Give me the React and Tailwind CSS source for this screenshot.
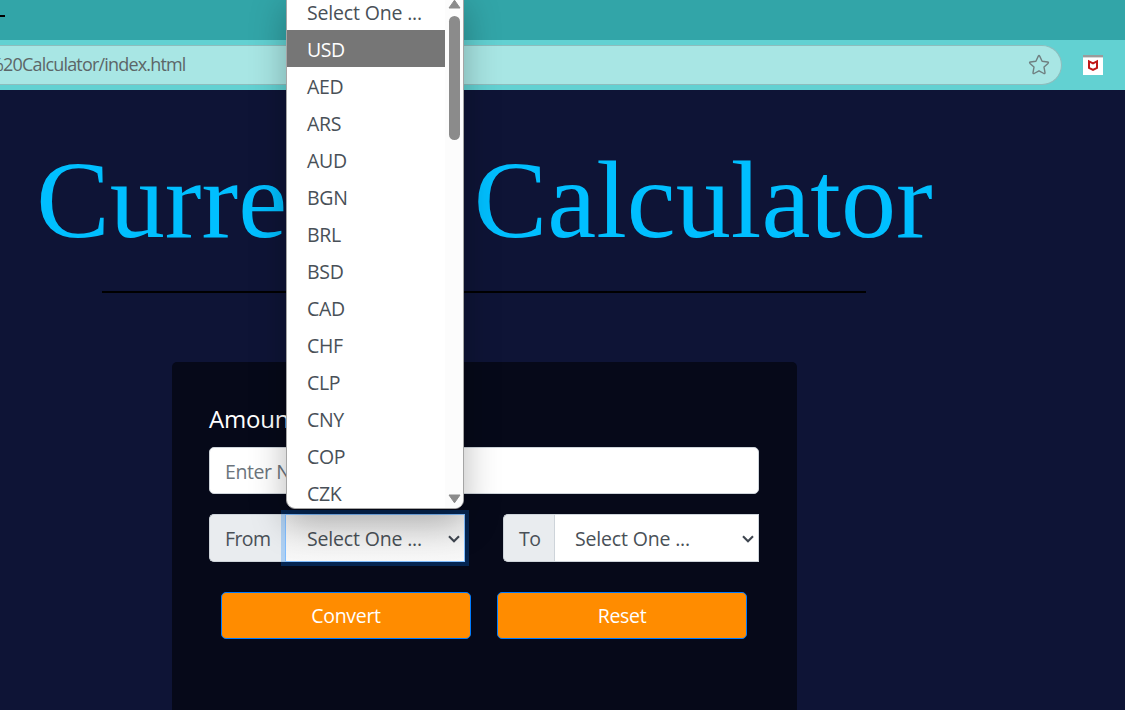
import React from "react";

const currencies = ["USD", "AED", "ARS", "AUD", "BGN", "BRL", "BSD", "CAD", "CHF", "CLP", "CNY", "COP", "CZK"];

function Chevron() {
  return (
    <svg width="14" height="10" viewBox="0 0 14 10" fill="none" className="shrink-0">
      <path d="M2 2.2 L7 7.2 L12 2.2" stroke="#3f4650" strokeWidth="2.1" />
    </svg>
  );
}

function BrowserBar() {
  return (
    <header className="shrink-0">
      <div className="h-10 bg-[#32a5a8]">
        <div className="h-[15px]" />
        <div className="h-[1.5px] w-[5px] bg-black" />
      </div>
      <div className="flex h-[50px] items-center bg-[#62d1d2]">
        <div className="flex h-[40px] w-[1062px] items-center justify-between rounded-r-full border border-l-0 border-[#8dbdbd] bg-[#a8e6e4] pr-[11px]">
          <div className="-ml-[11px] pb-[2px] text-[18px] leading-6 tracking-[-0.82px] whitespace-nowrap text-[#5c6668]">
            %20Calculator/index.html
          </div>
          <svg width="22" height="22" viewBox="0 0 22 22" fill="none" stroke="#6f7f80" strokeWidth="1.4" strokeLinejoin="round">
            <path d="M10.3 2.1 Q11 1 11.7 2.1 L14.1 7.3 L19.6 8 Q21 8.3 20 9.4 L16 13.1 L17 18.6 Q17.1 20 15.9 19.5 L11 16.8 L6.1 19.5 Q4.9 20 5 18.6 L6 13.1 L2 9.4 Q1 8.3 2.4 8 L7.9 7.3 Z" />
          </svg>
        </div>
        <svg width="20" height="20" viewBox="0 0 20 20" className="ml-[21px]">
          <rect width="20" height="20" fill="#fff" />
          <rect width="20" height="2.4" fill="#9b9b9b" />
          <path d="M6 6.4 L10 8.3 L14 6.4 V13 L10 15 L6 13 Z" fill="none" stroke="#c01818" strokeWidth="2" />
        </svg>
      </div>
    </header>
  );
}

function CurrencyField({ label, focused }) {
  return (
    <div className="flex h-12 w-[256px]">
      <div
        className={
          focused
            ? "flex w-[76px] items-center rounded-l-[5px] border border-r-0 border-[#ced4da] bg-[#e9ecef] pt-px pl-[15px]"
            : "flex w-[51px] items-center rounded-l-[5px] border border-r-0 border-[#ced4da] bg-[#e9ecef] pt-px pl-[15px]"
        }
      >
        <span className="text-[19.5px] tracking-[-0.6px]">{label}</span>
      </div>
      <div
        className={
          focused
            ? "relative flex flex-1 items-center justify-between border border-[#80bdff] bg-linear-to-b from-[#ededed] to-[#f8f8f8] pt-px pr-[3px] pl-[21px] shadow-[0_0_0_4px_rgba(0,123,255,0.25)]"
            : "flex flex-1 items-center justify-between border border-[#ced4da] bg-white pt-px pr-[3px] pl-[20px]"
        }
      >
        <span className="text-[19.5px] tracking-[-0.17px] whitespace-nowrap">Select One ...</span>
        <Chevron />
      </div>
    </div>
  );
}

function CurrencyMenu() {
  return (
    <div className="absolute -top-[8px] left-[286px] z-10 flex h-[517px] w-[178px] overflow-hidden rounded-b-[9px] border border-[#a5a5a5] bg-white text-[#495057] shadow-[0_14px_36px_rgba(0,0,0,0.28)]">
      <ul className="w-[158px] shrink-0 text-[19.5px] leading-[35px] whitespace-nowrap">
        <li className="h-[37px] pt-[2px] pl-5 tracking-[-0.17px]">Select One ...</li>
        {currencies.map((code) => (
          <li
            key={code}
            className={
              code === "USD"
                ? "h-[37px] bg-[#767676] pt-[2px] pl-5 tracking-[-0.4px] text-white"
                : "h-[37px] pt-[2px] pl-5 tracking-[-0.3px]"
            }
          >
            {code}
          </li>
        ))}
      </ul>
      <div className="flex flex-1 flex-col items-center justify-between bg-[#fcfcfc] pt-[6px] pb-[4px]">
        <div className="flex flex-col items-center gap-[7px]">
          <svg width="13" height="10" viewBox="0 0 13 10">
            <path d="M6.5 1.2 L12 9 H1 Z" fill="#8b8b8b" stroke="#8b8b8b" strokeLinejoin="round" />
          </svg>
          <div className="h-[124px] w-[11px] rounded-full bg-[#8b8b8b]" />
        </div>
        <svg width="13" height="10" viewBox="0 0 13 10">
          <path d="M6.5 8.8 L12 1 H1 Z" fill="#8b8b8b" stroke="#8b8b8b" strokeLinejoin="round" />
        </svg>
      </div>
    </div>
  );
}

export default function App() {
  return (
    <div className="relative flex h-[710px] w-[1125px] flex-col overflow-hidden bg-[#0e1436] font-['Open_Sans','Noto_Sans',sans-serif] text-[#495057]">
      <BrowserBar />
      <main className="flex w-[968px] flex-1 flex-col items-center pt-11">
        <h1 className="ml-px text-[110.2px] leading-[132px] whitespace-nowrap text-[#00bfff] font-['Liberation_Serif','Times_New_Roman',serif]">
          Currency Calculator
        </h1>
        <div className="mt-[25px] h-[2px] w-[764px] shrink-0 bg-black" />
        <section className="ml-px mt-[69px] w-[625px] flex-1 rounded-t-[5px] bg-[#060919] pt-[39px] pr-[38px] pl-[37px]">
          <label className="block h-[46px] text-[24px] leading-[36px] tracking-[-0.2px] text-white">Amount :</label>
          <div className="flex h-[47px] items-center rounded-[5px] border border-[#ced4da] bg-white pt-[3px] pl-[15px] text-[19.5px] tracking-[-0.4px] text-[#6c757d]">
            Enter Number
          </div>
          <div className="mt-5 flex justify-between">
            <CurrencyField label="From" focused />
            <CurrencyField label="To" />
          </div>
          <div className="mt-[30px] flex justify-between px-3 text-[19.5px] tracking-[-0.3px] text-white">
            <button className="h-[47px] w-[250px] rounded-[5px] border border-[#007bff] bg-[#ff8c00] pt-px">Convert</button>
            <button className="h-[47px] w-[250px] rounded-[5px] border border-[#007bff] bg-[#ff8c00] pt-px">Reset</button>
          </div>
        </section>
      </main>
      <CurrencyMenu />
    </div>
  );
}
